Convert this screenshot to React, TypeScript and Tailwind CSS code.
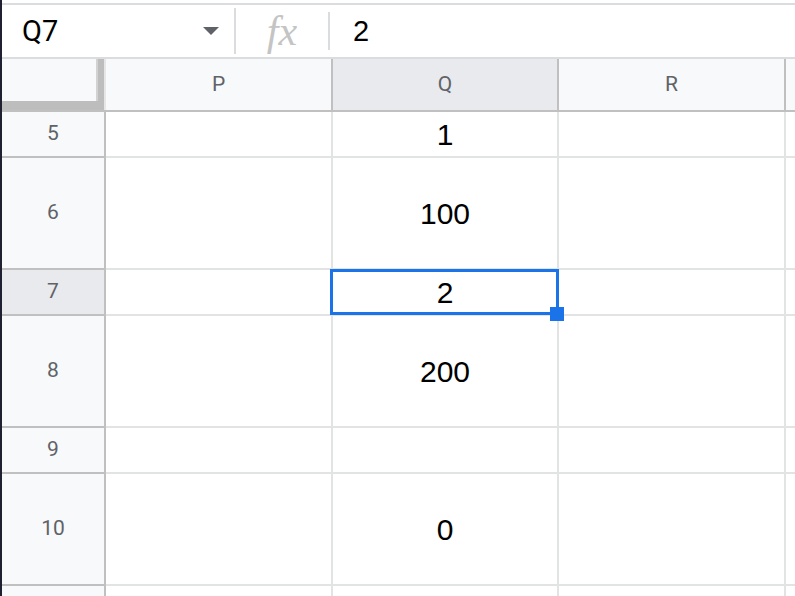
import React from 'react'

type Row = { n?: number; tall?: boolean; value?: string; selected?: boolean }

const rows: Row[] = [
  { n: 5, value: '1' },
  { n: 6, tall: true, value: '100' },
  { n: 7, value: '2', selected: true },
  { n: 8, tall: true, value: '200' },
  { n: 9 },
  { n: 10, tall: true, value: '0' },
  {},
]

const headFont = { fontFamily: 'Roboto, "Liberation Sans", sans-serif' }
const cellFont = { fontFamily: '"Liberation Sans", Arial, sans-serif' }

function FormulaBar() {
  return (
    <div className="flex h-[52px] shrink-0 items-center bg-white">
      <div className="flex w-[232px] items-center justify-between pl-[20px] pr-[15px]">
        <span className="text-[29px] leading-none text-black" style={headFont}>
          Q7
        </span>
        <svg width="16" height="8" viewBox="0 0 16 8">
          <polygon points="0,0 16,0 8,8" fill="#5f6368" />
        </svg>
      </div>
      <div className="h-[46px] w-[2px] bg-[#dadce0]" />
      <div className="flex w-[92px] justify-center">
        <span
          className="text-[42px] italic leading-none text-[#c4c4c4]"
          style={{ fontFamily: '"Liberation Serif", "DejaVu Serif", serif' }}
        >
          fx
        </span>
      </div>
      <div className="h-[38px] w-[2px] bg-[#dadce0]" />
      <span className="pl-[23px] text-[29px] leading-none text-black" style={cellFont}>
        2
      </span>
    </div>
  )
}

function Corner() {
  return (
    <div className="flex w-[104px] shrink-0 flex-col border-r-2 border-[#e6e6e6] bg-[#f8f9fa]">
      <div className="flex flex-1">
        <div className="flex-1" />
        <div className="w-[2px] bg-[#d2d2d2]" />
        <div className="w-[6px] bg-[#bdbdbd]" />
      </div>
      <div className="h-[9px] bg-[#bdbdbd]" />
    </div>
  )
}

function ColumnHeaders() {
  const cols = [
    { l: 'P', w: 'w-[227px]' },
    { l: 'Q', w: 'w-[226px]', sel: true },
    { l: 'R', w: 'w-[227px]' },
  ]
  return (
    <div className="flex h-[53px] shrink-0 border-b-2 border-[#c0c0c0]">
      <Corner />
      {cols.map(c => (
        <div
          key={c.l}
          className={`flex shrink-0 items-center justify-center border-r-2 border-[#c0c0c0] text-[21px] text-[#5f6368] ${c.w} ${
            c.sel ? 'bg-[#e8eaed]' : 'bg-[#f8f9fa]'
          }`}
          style={headFont}
        >
          {c.l}
        </div>
      ))}
      <div className="flex-1 bg-[#f8f9fa]" />
    </div>
  )
}

function GridRow({ row }: { row: Row }) {
  const h = row.tall ? 'h-[112px]' : 'h-[46px]'
  return (
    <div className={`flex shrink-0 ${h}`}>
      <div
        className={`flex w-[104px] shrink-0 items-center justify-center border-r-2 border-b-2 border-[#c0c0c0] text-[21px] text-[#5f6368] ${
          row.selected ? 'bg-[#e8eaed]' : 'bg-[#f8f9fa]'
        }`}
        style={headFont}
      >
        {row.n}
      </div>
      <div className="w-[227px] shrink-0 border-r-2 border-b-2 border-[#e2e3e3]" />
      <div
        className={`flex w-[226px] shrink-0 items-center justify-center border-r-2 border-b-2 border-[#e2e3e3] text-[30px] text-black ${
          row.selected ? 'relative z-10' : ''
        }`}
        style={cellFont}
      >
        {row.value}
        {row.selected && (
          <>
            {/* active cell outline + fill handle */}
            <div className="pointer-events-none absolute -left-[3px] -top-[1px] -right-[2px] -bottom-[1px] border-[3px] border-[#1a73e8]" />
            <div className="absolute -bottom-[7px] -right-[7px] h-[14px] w-[14px] bg-[#1a73e8]" />
          </>
        )}
      </div>
      <div className="w-[227px] shrink-0 border-r-2 border-b-2 border-[#e2e3e3]" />
      <div className="flex-1 border-b-2 border-[#e2e3e3]" />
    </div>
  )
}

export default function App() {
  return (
    <div className="flex h-[596px] w-[795px] overflow-hidden bg-white">
      <div className="w-[2px] shrink-0 bg-[#1f2133]" />
      <div className="flex min-w-0 flex-1 flex-col">
        <div className="h-[3px] shrink-0 bg-white" />
        <div className="h-[2px] shrink-0 bg-[#dadce0]" />
        <FormulaBar />
        <div className="h-[2px] shrink-0 bg-[#dadce0]" />
        <ColumnHeaders />
        {rows.map((r, i) => (
          <GridRow key={i} row={r} />
        ))}
      </div>
    </div>
  )
}
